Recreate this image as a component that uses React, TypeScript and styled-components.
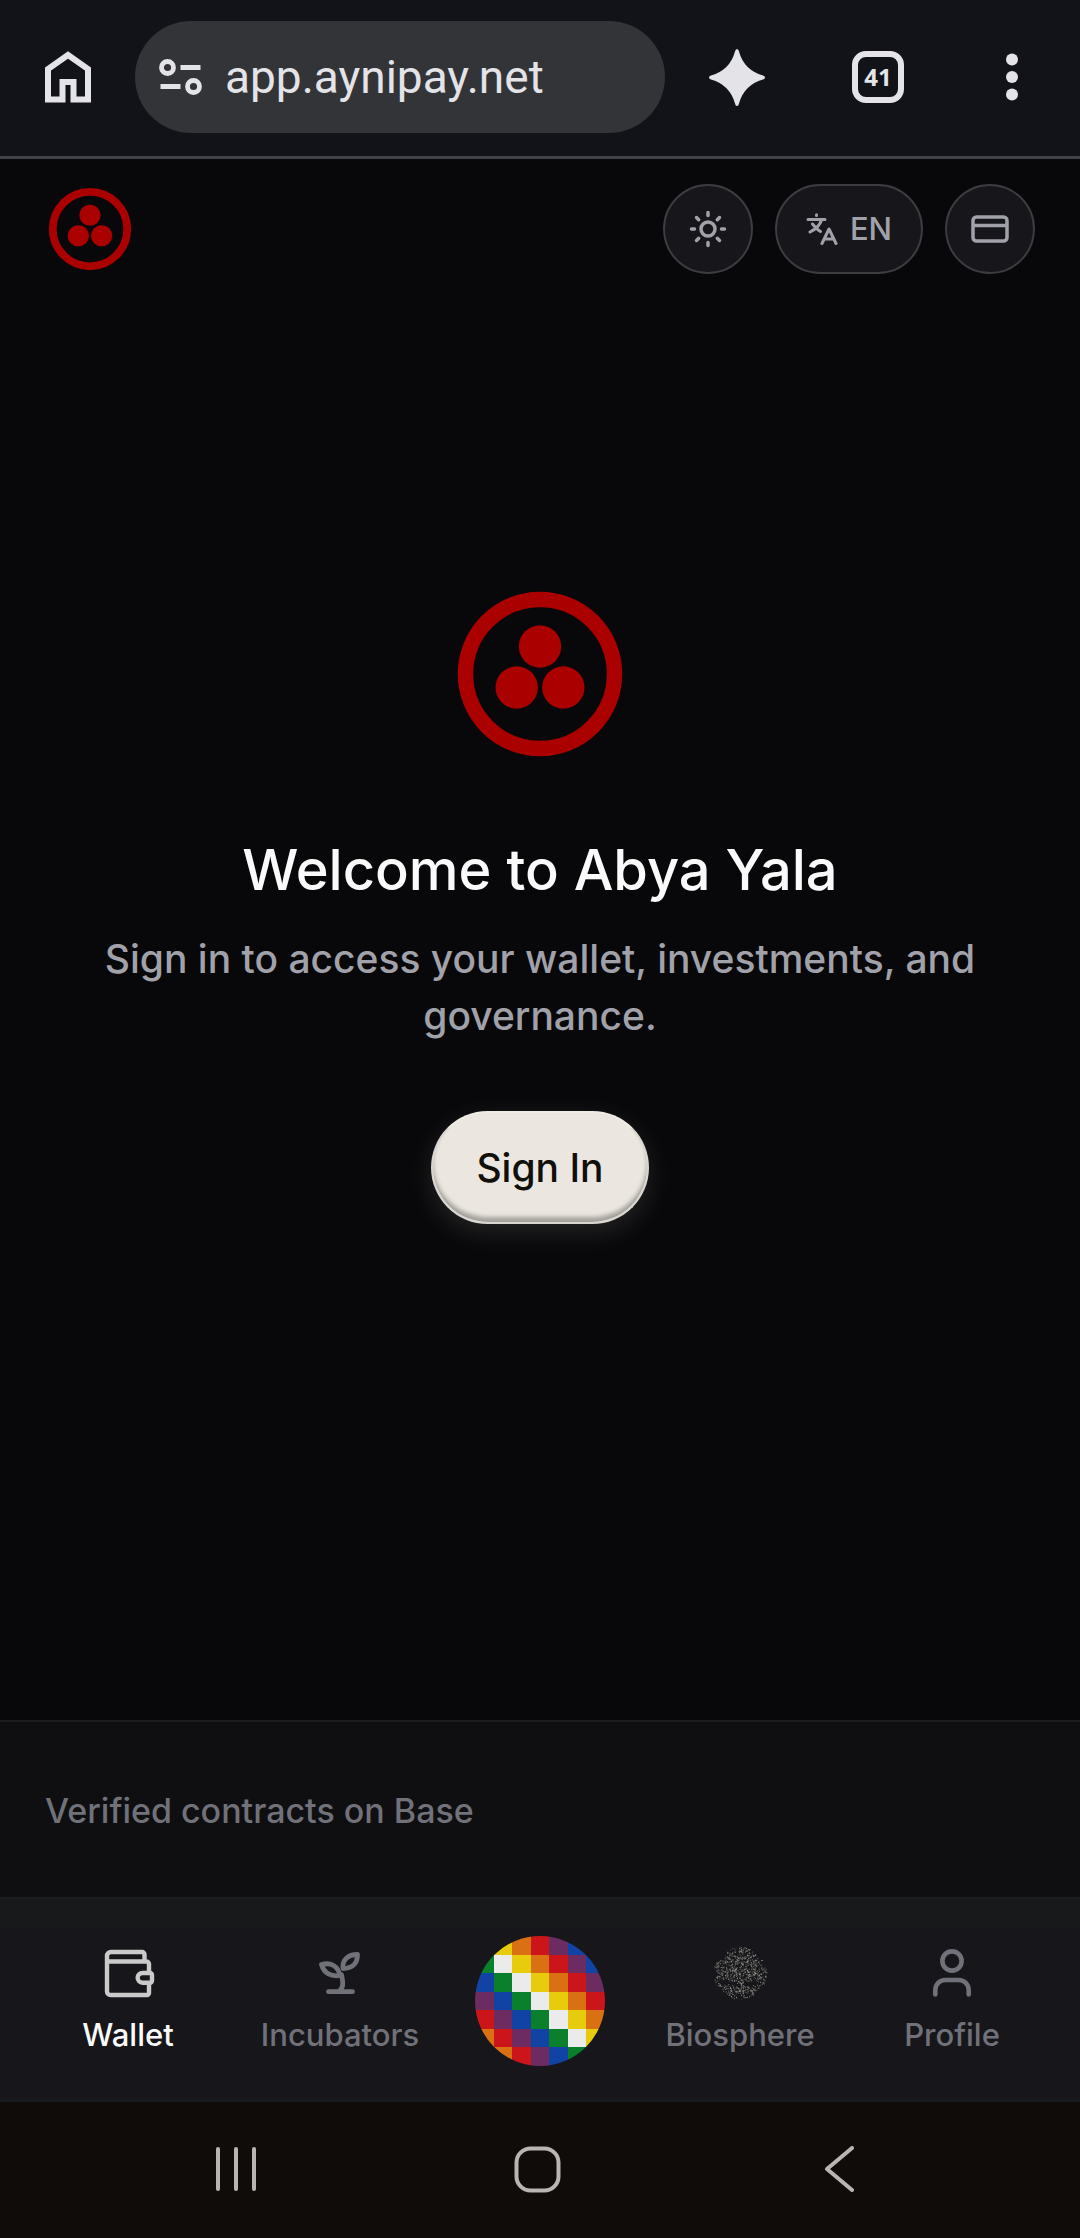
import React from "react";
import styled, { createGlobalStyle } from "styled-components";

const GlobalStyle = createGlobalStyle`
  *, *::before, *::after { box-sizing: border-box; }
  body { margin: 0; background: #08080a; }
  button { border: 0; padding: 0; margin: 0; background: none; font: inherit; color: inherit; cursor: pointer; }
  svg { display: block; flex: none; }
`;

const Page = styled.div`
  min-height: 100vh;
  display: flex;
  flex-direction: column;
  background: #08080a;
  color: #fafafa;
  font-family: Inter, "Liberation Sans", sans-serif;
  font-weight: 500;
`;

const BrowserBar = styled.div`
  display: flex;
  align-items: center;
  height: 159px;
  padding: 0 62px 2px 45px;
  background: #121318;
  border-bottom: 3px solid #404146;
  color: #e3e3e8;
`;

const AddressField = styled.label`
  flex: 1;
  min-width: 0;
  display: flex;
  align-items: center;
  gap: 22px;
  height: 112px;
  margin: 0 44px;
  padding: 0 24px;
  border-radius: 56px;
  background: #333438;
`;

const AddressInput = styled.input`
  flex: 1;
  min-width: 0;
  padding: 0;
  border: 0;
  outline: 0;
  background: transparent;
  color: #e3e3e8;
  font: 400 46px/56px Roboto, "Liberation Sans", sans-serif;
`;

const BrowserActions = styled.div`
  display: flex;
  align-items: center;
  gap: 87px;
  margin-right: 102px;
`;

const BarButton = styled.button`
  display: flex;
  align-items: center;
  justify-content: center;
`;

const TabCount = styled.button`
  width: 52px;
  height: 52px;
  border: 6px solid #e3e3e8;
  border-radius: 14px;
  font: 700 24px/40px "Open Sans", "Liberation Sans", sans-serif;
`;

const Header = styled.header`
  display: flex;
  align-items: center;
  justify-content: space-between;
  padding: 25px 45px;
`;

const HeaderActions = styled.div`
  display: flex;
  gap: 22px;
`;

const PillButton = styled.button<{ $wide?: boolean }>`
  display: flex;
  align-items: center;
  justify-content: center;
  gap: 12px;
  width: ${(p) => (p.$wide ? 148 : 90)}px;
  height: 90px;
  border: 2px solid #3c3c41;
  border-radius: 45px;
  background: #17171b;
  color: #a1a1aa;
  font-size: 31px;
  line-height: 44px;
`;

const Main = styled.main`
  flex: 1;
  display: flex;
  flex-direction: column;
  align-items: center;
  justify-content: center;
  padding: 0 90px 211px;
  text-align: center;
`;

const Title = styled.h1`
  margin: 66px 0 20px;
  font-size: 56px;
  line-height: 80px;
  font-weight: 500;
`;

const Lead = styled.p`
  margin: 0;
  color: #a1a1aa;
  font-size: 39px;
  line-height: 57px;
`;

const SignIn = styled.button`
  width: 218px;
  height: 113px;
  margin-top: 67px;
  border: 2px solid #d9d6cf;
  border-top-color: #efebe5;
  border-radius: 57px;
  background: #ebe7e0;
  color: #110f0a;
  font-size: 39px;
  box-shadow: inset 0 -5px 4px rgba(0, 0, 0, 0.3), 0 8px 28px rgba(235, 231, 224, 0.13);
`;

const Contracts = styled.footer`
  padding: 67px 45px 65px;
  border-top: 2px solid #1c1c1e;
  background: #0f0f11;
  color: #71717a;
  font-size: 34px;
  line-height: 43px;
`;

const BottomNav = styled.nav`
  display: grid;
  grid-template-columns: 1fr 1fr 188px 1fr 1fr;
  align-items: center;
  height: 205px;
  padding: 4px 22px 0;
  border-top: 2px solid #1f1f21;
  border-bottom: 3px solid #1a1b1f;
  background: linear-gradient(#18191a 29px, #17171b 29px);
`;

const NavItem = styled.a<{ $active?: boolean }>`
  display: flex;
  flex-direction: column;
  align-items: center;
  gap: 11px;
  color: ${(p) => (p.$active ? "#fafafa" : "#71717a")};
  font-size: 31px;
  line-height: 45px;
  text-decoration: none;
`;

const SystemBar = styled.div`
  display: flex;
  align-items: center;
  justify-content: center;
  gap: 257px;
  height: 136px;
  padding: 0 5px 2px 0;
  background: #0f0c09;
  color: #b8b5b2;
`;

const Logo = ({ size }: { size: number }) => (
  <svg width={size} height={size} viewBox="-90 -90 180 180" fill="#ab0000" aria-hidden="true">
    <circle r="74.5" fill="none" stroke="#ab0000" strokeWidth="15.5" />
    <circle cy="-27.5" r="21.2" />
    <circle cx="-23.3" cy="13.5" r="21.2" />
    <circle cx="23.3" cy="13.5" r="21.2" />
  </svg>
);

const HomeIcon = () => (
  <svg width="46" height="52" viewBox="0 0 46 52" fill="none" stroke="currentColor" strokeWidth="6">
    <path d="M3 48.500V18L23 4l20 14v30.500H28.500V31h-11v17.500z" />
  </svg>
);

const TuneIcon = () => (
  <svg width="44" height="38" viewBox="0 0 44 38" fill="none" stroke="currentColor" strokeWidth="4.800">
    <circle cx="8.500" cy="9.500" r="6" />
    <path d="M21.500 9.500h20M1.500 28.500h20" />
    <circle cx="34.500" cy="28.500" r="6" />
  </svg>
);

const SparkIcon = () => (
  <svg width="56" height="57" viewBox="0 0 56 57" fill="currentColor">
    <path d="M28 0q1.500 0 2 2.500Q35 21 54 26.500q2 .7 2 2t-2 2Q35 36 30 54.500q-.5 2.500-2 2.500t-2-2.500Q21 36 2 30.500q-2-.7-2-2t2-2Q21 21 26 2.500 26.500 0 28 0z" />
  </svg>
);

const DotsIcon = () => (
  <svg width="12" height="48" viewBox="0 0 12 48" fill="currentColor">
    <circle cx="6" cy="6.500" r="6" />
    <circle cx="6" cy="24" r="6" />
    <circle cx="6" cy="41.500" r="6" />
  </svg>
);

const SunIcon = () => (
  <svg width="38" height="38" viewBox="-19 -19 38 38" fill="none" stroke="currentColor" strokeWidth="3.500" strokeLinecap="round">
    <circle r="7" />
    <path d="M0-16.500v3M0 16.500v-3M-16.500 0h3M16.500 0h-3M-11.500-11.500l2.200 2.200M11.500-11.500l-2.200 2.200M-11.500 11.500l2.200-2.200M11.500 11.500l-2.200-2.200" />
  </svg>
);

const TranslateIcon = () => (
  <svg width="32" height="32" viewBox="0 0 32 32" fill="none" stroke="currentColor" strokeWidth="3" strokeLinecap="round" strokeLinejoin="round">
    <path d="M2 6.500h17M10.500 1.800v.8M4 19C10 16 14 12 15.500 7M6.500 11C9 14 12 17 14.500 18.500M16 30.500L23 16l7 14.500M18.500 26h9" />
  </svg>
);

const CardIcon = () => (
  <svg width="38" height="28" viewBox="0 0 38 28" fill="none" stroke="currentColor" strokeWidth="3.500">
    <rect x="2" y="2" width="34" height="24" rx="3.500" />
    <path d="M2 10.500h34" />
  </svg>
);

const WalletIcon = () => (
  <svg width="56" height="56" viewBox="0 0 56 56" fill="none" stroke="#cacaca" strokeWidth="4.400" strokeLinejoin="round">
    <path d="M44.500 16V9.500a2.500 2.500 0 0 0-2.500-2.500H11a4 4 0 0 0-4 4v35.500a3.500 3.500 0 0 0 3.500 3.500H47a2 2 0 0 0 2-2V38M49 28V19a2.500 2.500 0 0 0-2.500-2.500H7" />
    <path d="M52 30v5.700a2 2 0 0 1-2 2h-7.500a4.800 4.800 0 0 1 0-9.700H50a2 2 0 0 1 2 2z" />
  </svg>
);

const SproutIcon = () => (
  <svg width="56" height="56" viewBox="0 0 56 56" fill="none" stroke="currentColor" strokeWidth="4.800" strokeLinecap="round" strokeLinejoin="round">
    <path d="M16.500 46.700h24M27 46.700c5-4 4-10 2.500-17" />
    <path d="M28 30.500C18.500 32 12 28 9.500 19.500 19 17 26 21 28 30.500z" />
    <path d="M31 23.500C30 15 36 9.500 45.500 9.500 45.500 19 40 23.500 31 23.500z" />
  </svg>
);

const ProfileIcon = () => (
  <svg width="56" height="56" viewBox="0 0 56 56" fill="none" stroke="currentColor" strokeWidth="4.600" strokeLinecap="round">
    <circle cx="28" cy="16" r="9.600" />
    <path d="M11.300 49.500V45a10 10 0 0 1 10-10h13.400a10 10 0 0 1 10 10v4.500" />
  </svg>
);

/* Stippled tree of life: crown above, trunk and spreading roots below. */
const speckles = (() => {
  let seed = 41;
  const next = () => {
    seed = (seed * 16807) % 2147483647;
    return seed / 2147483647;
  };
  const dots: { x: number; y: number; o: number }[] = [];
  for (let i = 0; i < 1500; i++) {
    const x = next() * 54 - 27;
    const y = next() * 54 - 27;
    const o = 0.15 + next() * 0.6;
    const keep = next();
    const r = Math.hypot(x, y);
    const top = Math.hypot(x, y + 7) < 19.5;
    const sides = Math.abs(y) < 13 && r < 26.5;
    const roots = y > 12 && Math.hypot(x * 1.15, y) < 26.5;
    const soil = Math.abs(y - 11.5 + Math.abs(x) * 0.12) < 2.5 && Math.abs(x) > 3 && Math.abs(x) < 20;
    if (!(top || sides || roots)) continue;
    if (soil && keep > 0.15) continue;
    if (r > 20 && keep > 0.7) continue;
    dots.push({ x, y, o });
  }
  return dots;
})();

const BiosphereIcon = () => (
  <svg width="56" height="56" viewBox="-28 -28 56 56" fill="#b5b5a8">
    {speckles.map((d, i) => (
      <rect key={i} x={d.x} y={d.y} width="1" height="1" opacity={d.o} />
    ))}
  </svg>
);

const WIPHALA = ["#ebebeb", "#e6cc0c", "#da7014", "#cb151b", "#6c2c62", "#1143a5", "#0a802c"];

const Wiphala = () => (
  <svg width="130" height="130" viewBox="0 0 7 7" shapeRendering="crispEdges">
    <clipPath id="disc">
      <circle cx="3.5" cy="3.5" r="3.5" />
    </clipPath>
    <g clipPath="url(#disc)">
      {Array.from({ length: 49 }, (_, i) => {
        const col = i % 7;
        const row = Math.floor(i / 7);
        return <rect key={i} x={col} y={row} width="1" height="1" fill={WIPHALA[(col - row + 7) % 7]} />;
      })}
    </g>
  </svg>
);

const RecentsIcon = () => (
  <svg width="42" height="46" viewBox="0 0 42 46" stroke="currentColor" strokeWidth="4" strokeLinecap="round">
    <path d="M3 3v40M21 3v40M39 3v40" />
  </svg>
);

const SystemHomeIcon = () => (
  <svg width="47" height="47" viewBox="0 0 47 47" fill="none" stroke="currentColor" strokeWidth="4">
    <rect x="2.500" y="2.500" width="42" height="42" rx="14" />
  </svg>
);

const BackIcon = () => (
  <svg width="42" height="46" viewBox="0 0 42 46" fill="none" stroke="currentColor" strokeWidth="4" strokeLinecap="round" strokeLinejoin="round">
    <path d="M34 2L9 23l25 21" />
  </svg>
);

export default function App() {
  return (
    <Page>
      <GlobalStyle />
      <BrowserBar>
        <BarButton aria-label="Home"><HomeIcon /></BarButton>
        <AddressField>
          <TuneIcon />
          <AddressInput aria-label="Address" defaultValue="app.aynipay.net" />
        </AddressField>
        <BrowserActions>
          <BarButton aria-label="Assistant"><SparkIcon /></BarButton>
          <TabCount aria-label="Open tabs">41</TabCount>
        </BrowserActions>
        <BarButton aria-label="More"><DotsIcon /></BarButton>
      </BrowserBar>

      <Header>
        <Logo size={90} />
        <HeaderActions>
          <PillButton aria-label="Theme"><SunIcon /></PillButton>
          <PillButton $wide><TranslateIcon />EN</PillButton>
          <PillButton aria-label="Cards"><CardIcon /></PillButton>
        </HeaderActions>
      </Header>

      <Main>
        <Logo size={180} />
        <Title>Welcome to Abya Yala</Title>
        <Lead>Sign in to access your wallet, investments, and governance.</Lead>
        <SignIn>Sign In</SignIn>
      </Main>

      <Contracts>Verified contracts on Base</Contracts>

      <BottomNav>
        <NavItem href="#wallet" $active><WalletIcon />Wallet</NavItem>
        <NavItem href="#incubators"><SproutIcon />Incubators</NavItem>
        <NavItem href="#home" aria-label="Abya Yala"><Wiphala /></NavItem>
        <NavItem href="#biosphere"><BiosphereIcon />Biosphere</NavItem>
        <NavItem href="#profile"><ProfileIcon />Profile</NavItem>
      </BottomNav>

      <SystemBar>
        <BarButton aria-label="Recent apps"><RecentsIcon /></BarButton>
        <BarButton aria-label="Home screen"><SystemHomeIcon /></BarButton>
        <BarButton aria-label="Back"><BackIcon /></BarButton>
      </SystemBar>
    </Page>
  );
}
